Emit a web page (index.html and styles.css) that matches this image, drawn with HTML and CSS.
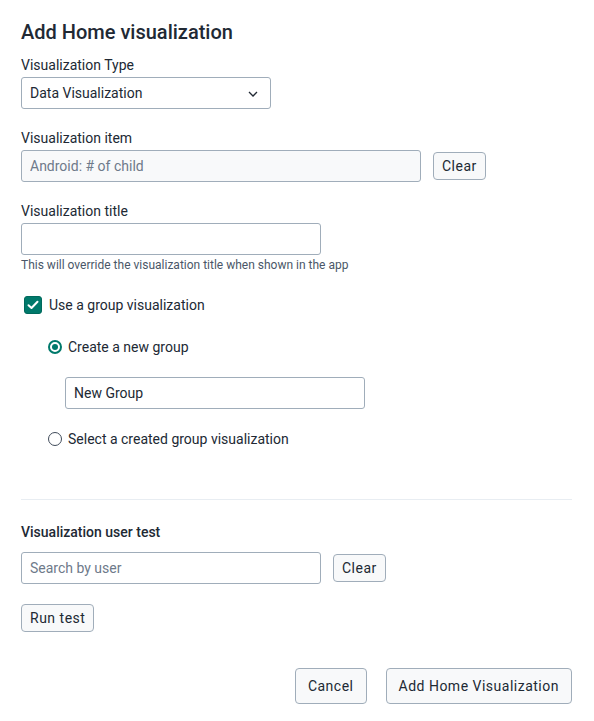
FILE: index.html
```html
<!DOCTYPE html>
<html lang="en">
<head>
<meta charset="utf-8">
<title>Add Home visualization</title>
<link rel="stylesheet" href="styles.css">
</head>
<body>
<div class="dialog">
  <h2 class="title">Add Home visualization</h2>

  <div class="field field-type">
    <div class="label">Visualization Type</div>
    <div class="select">
      <span>Data Visualization</span>
      <svg class="chevron" width="10" height="6" viewBox="0 0 10 6"><path d="M1 1l4 4 4-4" fill="none" stroke="#212934" stroke-width="1.3"/></svg>
    </div>
  </div>

  <div class="field field-item">
    <div class="label">Visualization item</div>
    <div class="row">
      <input class="input input-wide disabled" value="Android: # of child" disabled>
      <button class="btn btn-small">Clear</button>
    </div>
  </div>

  <div class="field field-title">
    <div class="label">Visualization title</div>
    <input class="input">
    <div class="help">This will override the visualization title when shown in the app</div>
  </div>

  <div class="check-row">
    <span class="checkbox">
      <svg width="12" height="10" viewBox="0 0 12 10"><path d="M1.5 5.2l3 2.8 6-6.3" fill="none" stroke="#fff" stroke-width="2" stroke-linecap="round" stroke-linejoin="round"/></svg>
    </span>
    <span>Use a group visualization</span>
  </div>

  <div class="group-options">
    <div class="radio-row radio-first">
      <span class="radio checked"></span>
      <span>Create a new group</span>
    </div>
    <input class="input group-input" value="New Group">
    <div class="radio-row radio-second">
      <span class="radio"></span>
      <span>Select a created group visualization</span>
    </div>
  </div>

  <hr class="divider">

  <div class="section-title">Visualization user test</div>
  <div class="row">
    <input class="input" placeholder="Search by user">
    <button class="btn btn-small">Clear</button>
  </div>
  <button class="btn btn-small run">Run test</button>

  <div class="actions">
    <button class="btn btn-large">Cancel</button>
    <button class="btn btn-large">Add Home Visualization</button>
  </div>
</div>
</body>
</html>
```

FILE: styles.css
```css
* { box-sizing: border-box; }

body {
  margin: 0;
  background: #ffffff;
  color: #212934;
  font-family: Roboto, "Liberation Sans", sans-serif;
  font-size: 14px;
}

.dialog {
  padding: 20px 22px 0 21px;
}

.title {
  margin: 0;
  font-size: 20px;
  font-weight: 500;
  line-height: 24px;
  color: #212934;
}

.label {
  font-size: 14px;
  line-height: 20px;
  margin-bottom: 2px;
}

.field-type { margin-top: 11px; }
.field-item { margin-top: 19px; }
.field-title { margin-top: 19px; }

.select {
  width: 250px;
  height: 32px;
  border: 1px solid #a0adba;
  border-radius: 3px;
  display: flex;
  align-items: center;
  justify-content: space-between;
  padding: 0 12px 0 8px;
  font-size: 14px;
  background: #fff;
}

.chevron { margin-top: 1px; }

.row {
  display: flex;
  align-items: center;
  gap: 12px;
}

.input {
  width: 300px;
  height: 32px;
  border: 1px solid #a0adba;
  border-radius: 3px;
  padding: 0 8px;
  font-family: inherit;
  font-size: 14px;
  color: #212934;
  background: #fff;
  outline: none;
  margin: 0;
}

.input::placeholder { color: #6e7a8a; }

.input-wide { width: 400px; }

.disabled {
  background: #f8f9fa;
  color: #6e7a8a;
  -webkit-text-fill-color: #6e7a8a;
  opacity: 1;
}

.help {
  margin-top: 3px;
  font-size: 12px;
  line-height: 14px;
  color: #4a5768;
}

.check-row {
  margin-top: 24px;
  display: flex;
  align-items: center;
  gap: 7px;
  padding-left: 3px;
  line-height: 18px;
}

.checkbox {
  width: 18px;
  height: 18px;
  border-radius: 3px;
  background: #00796b;
  border: 1px solid #00695c;
  display: flex;
  align-items: center;
  justify-content: center;
}

.group-options {
  padding-left: 27px;
}

.radio-row {
  display: flex;
  align-items: center;
  gap: 6px;
  line-height: 18px;
}

.radio-first { margin-top: 24px; }
.radio-second { margin-top: 21px; }

.radio {
  width: 14px;
  height: 14px;
  border-radius: 50%;
  border: 1px solid #404b5a;
  display: flex;
  align-items: center;
  justify-content: center;
  background: #fff;
}

.radio.checked {
  border: 2px solid #00796b;
}

.radio.checked::after {
  content: "";
  width: 6px;
  height: 6px;
  border-radius: 50%;
  background: #00796b;
}

.group-input {
  margin-top: 21px;
  margin-left: 17px;
  display: block;
}

.divider {
  margin: 51px 0 0;
  border: 0;
  border-top: 1px solid #e8edf2;
  height: 0;
}

.section-title {
  margin-top: 22px;
  font-weight: 500;
  line-height: 20px;
  margin-bottom: 10px;
}

.btn {
  font-family: inherit;
  font-size: 14px;
  letter-spacing: 0.5px;
  color: #212934;
  background: #f8f9fa;
  border: 1px solid #a0adba;
  border-radius: 4px;
  margin: 0;
  cursor: pointer;
}

.btn-small {
  height: 28px;
  padding: 0 8px;
}

.run {
  display: block;
  margin-top: 20px;
}

.actions {
  margin-top: 36px;
  display: flex;
  justify-content: flex-end;
  gap: 19px;
}

.btn-large {
  height: 36px;
  padding: 0 12px;
}
```
